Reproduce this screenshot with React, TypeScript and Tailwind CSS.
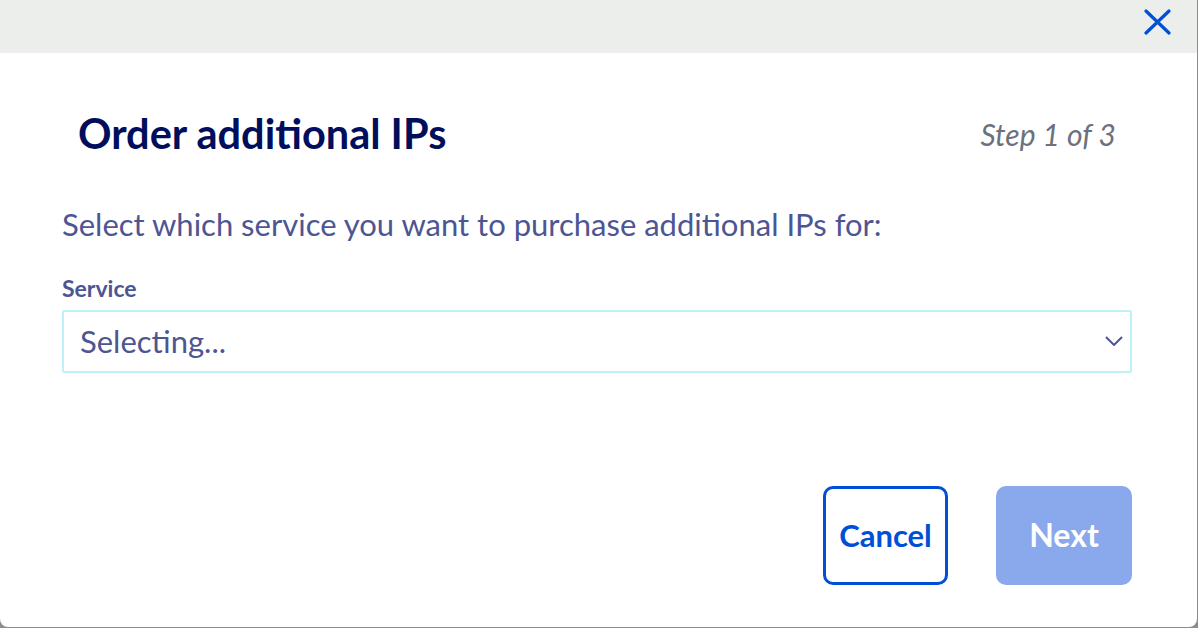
import React from "react";

const App: React.FC = () => {
  return (
    <div
      className="w-[1198px] h-[628px] bg-[#8c8c96] overflow-hidden"
      style={{ fontFamily: "Lato, 'Open Sans', sans-serif" }}
    >
      <div className="w-[1197px] h-[627px] bg-white rounded-b-lg overflow-hidden flex flex-col">
        {/* header bar */}
        <div className="h-[53px] bg-[#eceeeb] flex justify-end items-start pr-[26px] pt-[9px]">
          <button className="w-[27px] h-[26px] text-[#0050d7]">
            <svg viewBox="0 0 27 26" width="27" height="26" fill="none" stroke="currentColor" strokeWidth="3.2" strokeLinecap="round">
              <path d="M2 2L25 24M25 2L2 24" />
            </svg>
          </button>
        </div>

        <div className="flex-1 flex flex-col pl-[62px] pr-[65px]">
          <div className="flex justify-between items-center mt-[60px] pl-[16px]">
            <h1 className="text-[41.5px] font-bold text-[#000e5c] leading-none">Order additional IPs</h1>
            <span className="text-[30px] italic text-[#6b717d] leading-none pr-[16px]">Step 1 of 3</span>
          </div>

          <p className="mt-[54px] text-[31px] text-[#4d5592] leading-none">
            Select which service you want to purchase additional IPs for:
          </p>

          <label className="mt-[37px] text-[23px] font-bold text-[#4d5592] leading-none">Service</label>
          <div className="mt-[10px] h-[63px] border-2 border-[#bdf1f8] rounded-[2px] flex items-center justify-between pl-[16px] pr-[7px]">
            <span className="text-[31px] text-[#4d5592] leading-none">Selecting...</span>
            <svg viewBox="0 0 18 10" width="18" height="10" fill="none" stroke="#4d5592" strokeWidth="2">
              <path d="M1 1L9 9L17 1" />
            </svg>
          </div>

          <div className="mt-[113px] flex justify-end gap-[48px]">
            <button className="w-[125px] h-[99px] border-[3px] border-[#0050d7] rounded-[10px] text-[#0050d7] text-[31px] font-bold">
              Cancel
            </button>
            <button className="w-[136px] h-[99px] bg-[#8aa8ec] rounded-[10px] text-white text-[32px] font-bold">
              Next
            </button>
          </div>
        </div>
      </div>
    </div>
  );
};

export default App;
